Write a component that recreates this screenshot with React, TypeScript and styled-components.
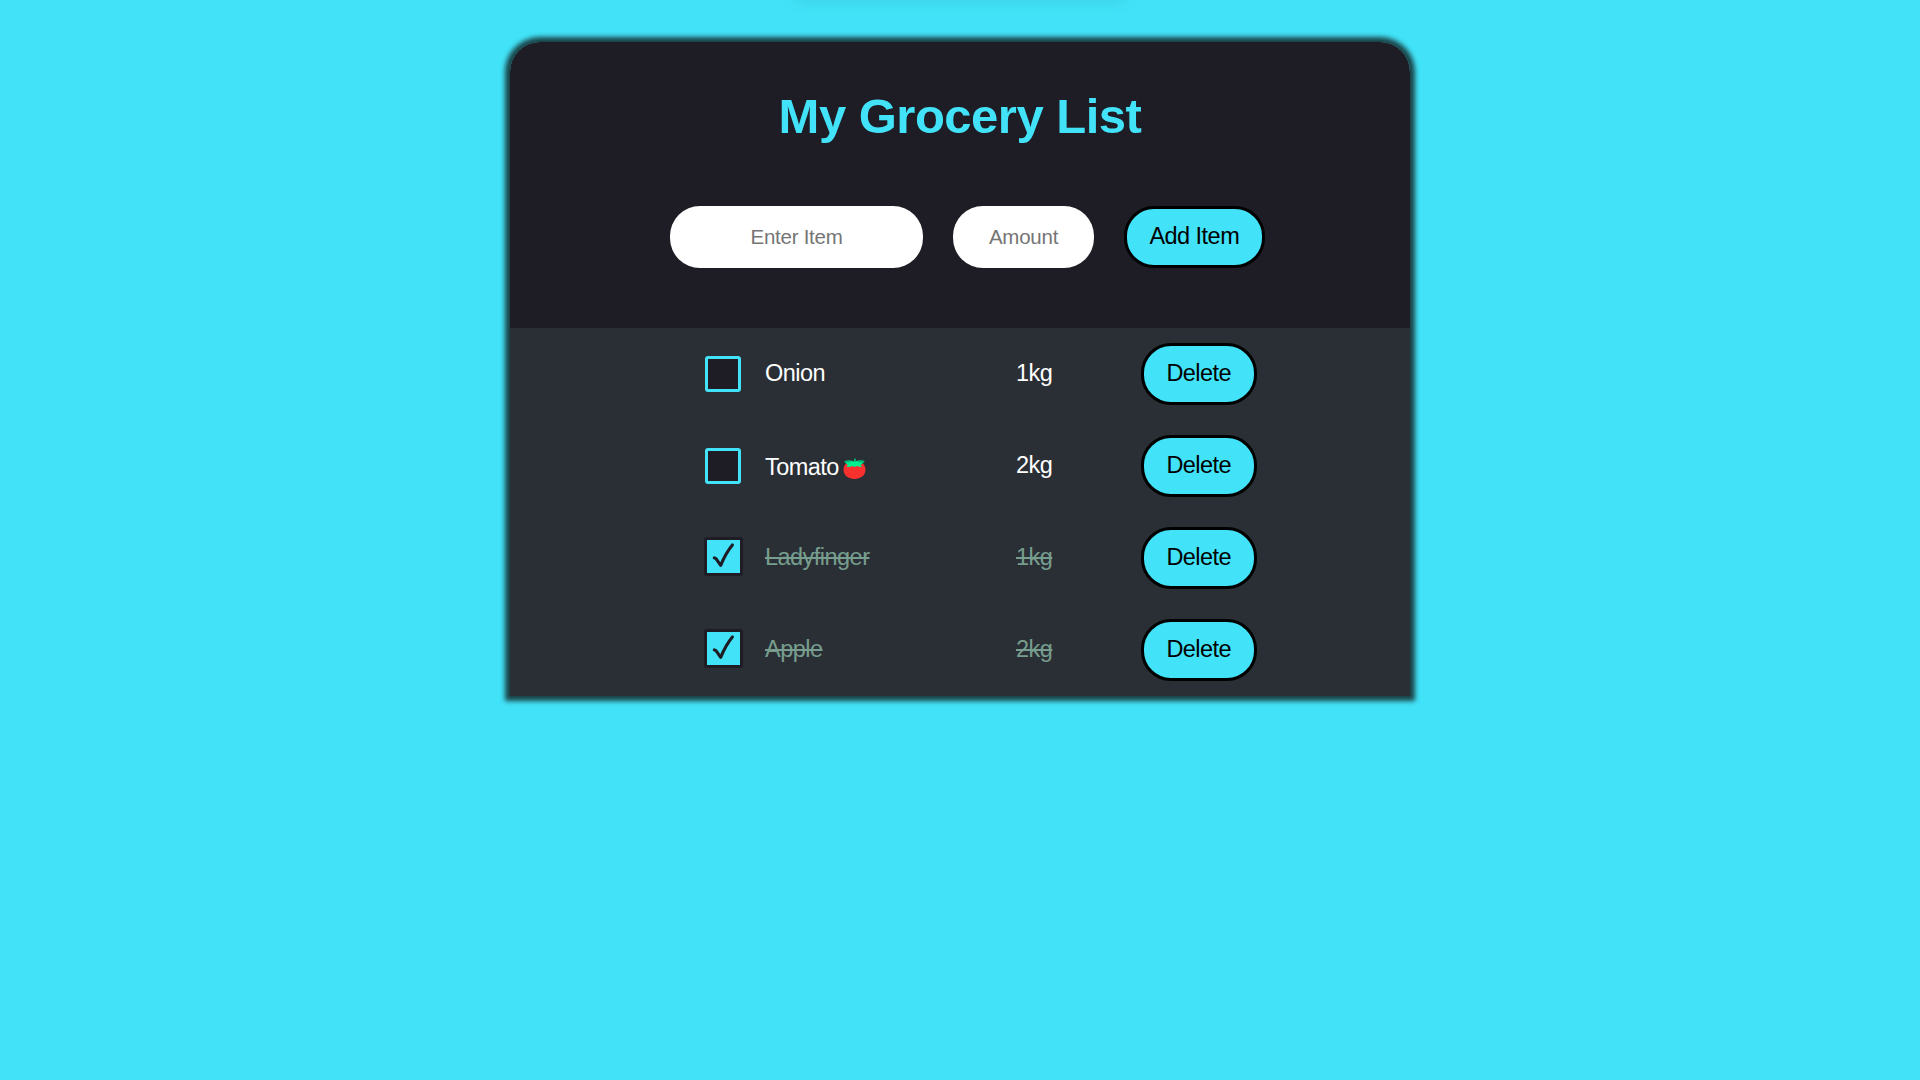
import React, { useState } from "react";
import styled, { createGlobalStyle, css } from "styled-components";

const cyan = "#42e3f8";
const ink = "#1e1c24";

const GlobalStyle = createGlobalStyle`
  * { box-sizing: border-box; }
  body {
    margin: 0;
    background: ${cyan};
    font-family: Arial, "Liberation Sans", sans-serif;
    font-size: 23.5px;
    letter-spacing: -0.53px;
  }
`;

const Page = styled.div`
  display: flex;
  flex-direction: column;
  align-items: center;
  min-height: 100vh;
  overflow: hidden;
`;

const Toast = styled.div`
  width: 330px;
  height: 40px;
  margin-top: -43px;
  border-radius: 8px;
  box-shadow: 0 1px 20px rgba(0, 0, 0, 0.13);
`;

const Card = styled.main`
  width: 900px;
  margin-top: 45px;
  border-radius: 30px 30px 0 0;
  box-shadow: 0 0 5px 5px #1a4347;
`;

const Header = styled.header`
  display: flex;
  flex-direction: column;
  height: 286px;
  padding-top: 46px;
  border-radius: 30px 30px 0 0;
  background: ${ink};
`;

const Title = styled.h1`
  margin: 0;
  height: 118px;
  color: ${cyan};
  font-size: 49px;
  letter-spacing: -0.5px;
  line-height: 56px;
  text-align: center;
`;

const Form = styled.form`
  display: flex;
  gap: 30px;
  margin-left: 160px;
`;

const Field = styled.input<{ $width: number }>`
  width: ${(p) => p.$width}px;
  height: 62px;
  padding: 0 10px;
  border: 0;
  border-radius: 30px;
  background: #fff;
  font-family: inherit;
  font-size: 20.5px;
  letter-spacing: -0.25px;
  text-align: center;
  outline: none;
  &::placeholder { color: #757575; opacity: 1; }
`;

const Button = styled.button`
  height: 62px;
  padding: 0 22.4px 1px;
  border: 3px solid #000;
  border-radius: 30px;
  background: ${cyan};
  color: #000;
  font: inherit;
  letter-spacing: inherit;
  white-space: nowrap;
`;

const List = styled.ul`
  margin: 0;
  padding: 0;
  list-style: none;
  background: #2a2e35;
`;

const Row = styled.li`
  display: grid;
  grid-template-columns: 60px 251px 125px auto;
  justify-content: start;
  align-items: center;
  height: 92px;
  padding-left: 195px;
`;

const Check = styled.button<{ $done: boolean }>`
  display: flex;
  align-items: center;
  justify-content: center;
  width: 36px;
  height: 36px;
  padding: 0;
  border: 3px solid ${cyan};
  border-radius: 3px;
  background: ${ink};
  ${(p) =>
    p.$done &&
    css`
      width: 39px;
      height: 39px;
      margin: 0 0 3px -1px;
      border-color: ${ink};
      background: ${cyan};
    `}
`;

const Label = styled.span<{ $done: boolean; $drop?: number }>`
  display: flex;
  align-items: center;
  line-height: 26px;
  padding-top: ${(p) => p.$drop ?? 0}px;
  margin-bottom: 3px;
  color: ${(p) => (p.$done ? "#769d8d" : "#fff")};
  text-decoration: ${(p) => (p.$done ? "line-through 2px" : "none")};
`;

const Tick = () => (
  <svg width="33" height="33" viewBox="0 0 33 33">
    <path
      d="M7.300 17.800 9 18.600 13.700 25.300 C16.500 18.500 20 11.500 25.400 5"
      fill="none"
      stroke={ink}
      strokeWidth="3.100"
      strokeLinecap="round"
      strokeLinejoin="round"
    />
  </svg>
);

const TomatoSvg = styled.svg`
  display: block;
  margin: 3px 0 0 4px;
`;

const Tomato = () => (
  <TomatoSvg width="23" height="22" viewBox="0 0 23 22">
    <path d="M11.500 4.500C17 2.600 22.500 5.500 22.500 11.500 22.500 17.500 17.500 21 11.500 21S.5 17.500.5 11.500C.5 5.500 6 2.600 11.500 4.500z" fill="#f8312f" />
    <path d="M11 1h1.500v2.500C15 2 18.500 2.200 21.500 3c-1.200 2-2.600 3.500-4.200 4.200.8.400 1.500 1 1.900 1.500-2 .5-4 .1-5.200-.6l-2.500 1-2.700-1c-1.400.9-3.300 1-5.200.6.400-.8 1-1.300 1.700-1.600C3.600 6.400 2.300 5 1.500 3c3.500-.8 7-.8 9.500.5z" fill="#00f091" />
    <path d="M11 .5h1.500v3.500H11zM1.500 3c3.500-.8 5.500-.8 7.500.2L5.500 4.600 2.700 4.800zM21.500 3c-3-.8-5.500-.6-7.500.2l3.500 1.400 2.800.2z" fill="#00b873" />
  </TomatoSvg>
);

const initial = [
  { name: "Onion", amount: "1kg", done: false, tomato: false },
  { name: "Tomato", amount: "2kg", done: false, tomato: true },
  { name: "Ladyfinger", amount: "1kg", done: true, tomato: false },
  { name: "Apple", amount: "2kg", done: true, tomato: false },
];

export default function App() {
  const [items, setItems] = useState(initial);
  const [name, setName] = useState("");
  const [amount, setAmount] = useState("");

  const add = (e: React.FormEvent) => {
    e.preventDefault();
    if (!name) return;
    setItems([...items, { name, amount, done: false, tomato: false }]);
    setName("");
    setAmount("");
  };
  const toggle = (i: number) =>
    setItems(items.map((it, k) => (k === i ? { ...it, done: !it.done } : it)));

  return (
    <Page>
      <GlobalStyle />
      <Toast />
      <Card>
        <Header>
          <Title>My Grocery List</Title>
          <Form onSubmit={add}>
            <Field $width={253} placeholder="Enter Item" value={name} onChange={(e) => setName(e.target.value)} />
            <Field $width={141} placeholder="Amount" value={amount} onChange={(e) => setAmount(e.target.value)} />
            <Button type="submit">Add Item</Button>
          </Form>
        </Header>
        <List>
          {items.map((it, i) => (
            <Row key={i}>
              <Check type="button" $done={it.done} onClick={() => toggle(i)}>
                {it.done && <Tick />}
              </Check>
              <Label $done={it.done} $drop={it.tomato ? 5 : 0}>
                {it.name}
                {it.tomato && <Tomato />}
              </Label>
              <Label $done={it.done}>{it.amount}</Label>
              <Button type="button" onClick={() => setItems(items.filter((_, k) => k !== i))}>
                Delete
              </Button>
            </Row>
          ))}
        </List>
      </Card>
    </Page>
  );
}
